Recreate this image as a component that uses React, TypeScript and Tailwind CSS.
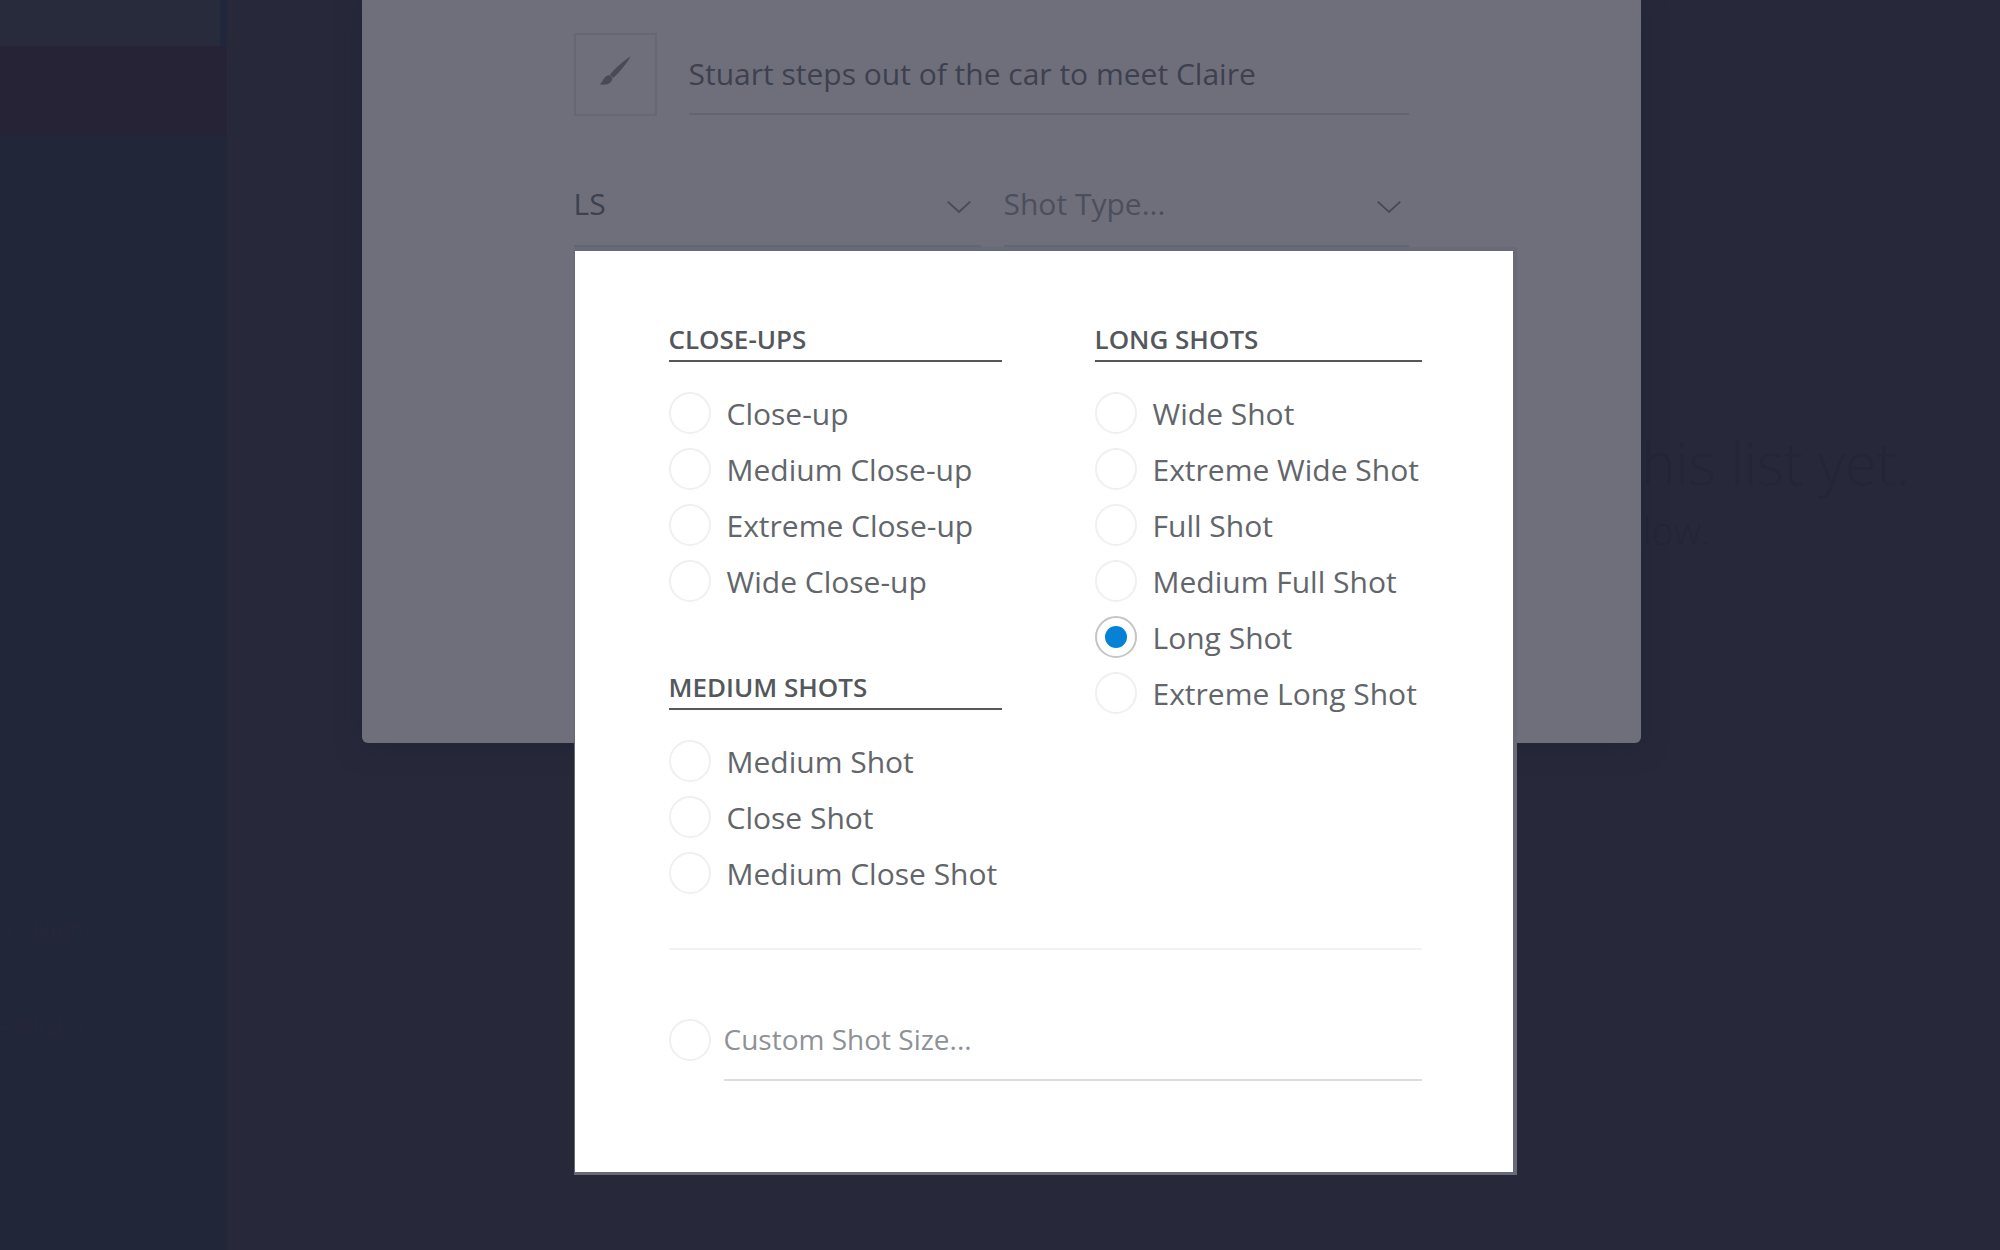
import { useState } from "react";

const closeUps = ["Close-up", "Medium Close-up", "Extreme Close-up", "Wide Close-up"];
const mediumShots = ["Medium Shot", "Close Shot", "Medium Close Shot"];
const longShots = ["Wide Shot", "Extreme Wide Shot", "Full Shot", "Medium Full Shot", "Long Shot", "Extreme Long Shot"];

const radioClass =
  "flex size-[42px] shrink-0 appearance-none items-center justify-center rounded-full border-2 border-[#f0f0f0] bg-white checked:border-[#c4c5c7] checked:before:size-[22px] checked:before:rounded-full checked:before:bg-[#0581d6]";

type GroupProps = {
  title: string;
  options: string[];
  value: string;
  onChange: (v: string) => void;
};

function Group({ title, options, value, onChange }: GroupProps) {
  return (
    <fieldset className="flex flex-col">
      <legend className="w-full border-b-2 border-[#54575c] pb-[3px] text-[26px] leading-9 font-semibold text-[#54575c]">
        {title}
      </legend>
      <div className="mt-[23px] flex flex-col">
        {options.map((o) => (
          <label key={o} className="flex h-14 items-center gap-4 text-[30px] whitespace-nowrap text-[#62666b]">
            <input
              type="radio"
              name="shot-size"
              checked={value === o}
              onChange={() => onChange(o)}
              className={radioClass}
            />
            {o}
          </label>
        ))}
      </div>
    </fieldset>
  );
}

function Chevron() {
  return (
    <svg viewBox="0 0 24 12" className="mt-1.5 h-3 w-6" fill="none" stroke="#474957" strokeWidth="1.8">
      <path d="M0.7 0.7 L12 11 L23.3 0.7" />
    </svg>
  );
}

function Brush() {
  return (
    <svg viewBox="0 0 32 30" className="h-[30px] w-8" fill="#484a58">
      <path d="M31.6 0.3 C25 4.500 16 12.500 11.200 18.300 C11.700 20.300 12.800 21.300 14.600 21.800 C20 16.500 28 7.500 31.600 0.300 Z" />
      <path d="M9.800 19 C11.500 19.500 13.300 21 13.300 22.800 C13 27 8.500 29.600 0.500 28.300 C4 26.500 4 20.500 9.800 19 Z" />
    </svg>
  );
}

export default function App() {
  const [size, setSize] = useState("Long Shot");
  const [title, setTitle] = useState("Stuart steps out of the car to meet Claire");
  const [custom, setCustom] = useState("");

  return (
    <div className="relative flex min-h-screen overflow-hidden bg-[#27293a] font-['Open_Sans',sans-serif]">
      <aside className="flex w-[227px] shrink-0 flex-col bg-[#222639] text-2xl whitespace-nowrap text-[#272639]">
        <div className="h-[46px] border-r-[7px] border-[#20263c] bg-[#282b3c]" />
        <div className="h-[90px] bg-[#252335]" />
        <div className="mt-[776px] flex flex-col gap-[60px]">
          <p className="leading-9">y - Night</p>
          <p className="leading-9">- NIGHT</p>
        </div>
      </aside>
      <main className="flex flex-1 flex-col items-end pt-[420px] pr-[90px] text-[#232636]">
        <p className="text-[58px] leading-[86px] font-light">this list yet.</p>
        <p className="mr-[200px] text-[38px] leading-[48px] font-light">below.</p>
      </main>

      <div className="absolute inset-x-0 top-0 flex justify-center pl-0.5">
        <section className="w-[1279px] rounded-b-md bg-[#6f6f7b] px-[212px] pt-[33px] pb-[496px] shadow-[0_4px_24px_#222435]">
          <div className="mr-5 flex items-start gap-8">
            <button
              type="button"
              aria-label="Edit drawing"
              className="flex size-[83px] shrink-0 items-center justify-center border-2 border-[#656775] pb-2"
            >
              <Brush />
            </button>
            <input
              aria-label="Shot description"
              value={title}
              onChange={(e) => setTitle(e.target.value)}
              className="h-[82px] min-w-0 flex-1 border-b-2 border-[#626472] bg-transparent text-[30px] text-[#3d404e] outline-none"
            />
          </div>
          <div className="mt-[46px] mr-5 flex gap-[23px]">
            <div className="relative w-[407px]">
              <button
                type="button"
                className="flex h-[85px] w-full items-center justify-between border-b-2 border-[#636573] pr-2.5 text-[30px] text-[#3d404e]"
              >
                LS
                <Chevron />
              </button>
              <div className="absolute top-full left-0 w-[943px] border-t-4 border-r-4 border-b-[3px] border-l border-[#696a77] bg-white pt-[70px] pr-[91px] pb-[91px] pl-[94px]">
                <div className="grid grid-cols-[333px_327px] items-start justify-between">
                  <div className="flex flex-col gap-[60px]">
                    <Group title="CLOSE-UPS" options={closeUps} value={size} onChange={setSize} />
                    <Group title="MEDIUM SHOTS" options={mediumShots} value={size} onChange={setSize} />
                  </div>
                  <Group title="LONG SHOTS" options={longShots} value={size} onChange={setSize} />
                </div>
                <div className="mt-[47px] flex items-center gap-[13px] border-t-2 border-[#f3f3f3] pt-[49px]">
                  <input
                    type="radio"
                    name="shot-size"
                    aria-label="Custom shot size"
                    checked={size === "custom"}
                    onChange={() => setSize("custom")}
                    className={radioClass}
                  />
                  <input
                    aria-label="Custom shot size name"
                    placeholder="Custom Shot Size..."
                    value={custom}
                    onChange={(e) => setCustom(e.target.value)}
                    className="h-[82px] min-w-0 flex-1 border-b-2 border-[#dcdddd] text-[28px] outline-none placeholder:text-[#8e9296]"
                  />
                </div>
              </div>
            </div>
            <button
              type="button"
              className="flex h-[85px] flex-1 items-center justify-between border-b-2 border-[#636573] pr-2 text-[30px] text-[#4b4e5b]"
            >
              Shot Type...
              <Chevron />
            </button>
          </div>
        </section>
      </div>
    </div>
  );
}
